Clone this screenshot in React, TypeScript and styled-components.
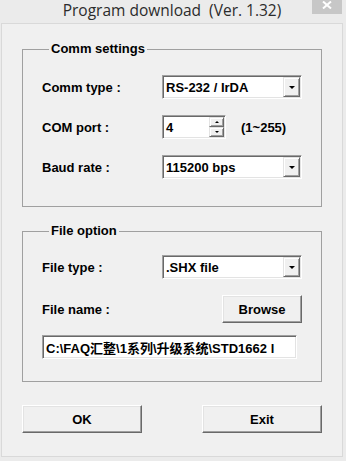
import styled, { createGlobalStyle } from "styled-components";

const GlobalStyle = createGlobalStyle`
    html, body {
        margin: 0;
        padding: 0;
        background: #ebebeb;
    }
    body {
        font-family: "Liberation Sans", Arial, sans-serif;
    }
`

const Window = styled.div`
    width: 346px;
    height: 461px;
    box-sizing: border-box;
    padding: 0 3px 4px 1px;
    background: #ebebeb;
    display: flex;
    flex-direction: column;
    overflow: hidden;
`

const TitleBar = styled.div`
    height: 23px;
    flex-shrink: 0;
    display: grid;
    grid-template-columns: 1fr auto 1fr;
    align-items: start;
`

const Title = styled.div`
    grid-column: 2;
    font-family: "Open Sans", "Noto Sans", sans-serif;
    font-size: 15.5px;
    line-height: 21px;
    color: #2b2b2b;
    white-space: pre;
`

const CloseButton = styled.div`
    grid-column: 3;
    justify-self: end;
    margin-right: 1px;
    width: 30px;
    height: 14px;
    background: #c7c7c7;
    display: flex;
    justify-content: center;
    align-items: flex-start;
    padding-top: 1px;
    box-sizing: border-box;
`

const Client = styled.div`
    flex: 1;
    box-sizing: border-box;
    border: 1px solid #d9d9d9;
    background: #f0f0f0;
    padding: 17px 0 0 20px;
    display: flex;
    flex-direction: column;
`

const Group = styled.fieldset<{ $pt: number; $pb: number; $mt?: number }>`
    width: 300px;
    box-sizing: border-box;
    margin: ${p => p.$mt ?? 0}px 0 0 0;
    padding: ${p => p.$pt}px 19px ${p => p.$pb}px 19px;
    border: 1px solid #a0a0a0;
    display: flex;
    flex-direction: column;
    min-width: 0;
`

const Legend = styled.legend`
    margin-left: 7px;
    padding: 0 2px;
    font-size: 13px;
    font-weight: bold;
    line-height: 16px;
    color: #000;
`

const Row = styled.div<{ $mt?: number }>`
    display: grid;
    grid-template-columns: 120px 1fr;
    align-items: center;
    margin-top: ${p => p.$mt ?? 0}px;
`

const Label = styled.span`
    font-size: 13px;
    font-weight: bold;
    color: #000;
`

const Sunken = styled.div<{ $w: number }>`
    width: ${p => p.$w}px;
    height: 24px;
    box-sizing: border-box;
    border: 1px solid;
    border-color: #a0a0a0 #ffffff #ffffff #a0a0a0;
    box-shadow: inset 1px 1px 0 #696969, inset -1px -1px 0 #e3e3e3;
    background: #fff;
    display: flex;
    align-items: stretch;
    padding: 1px;
`

const FieldText = styled.span`
    flex: 1;
    display: flex;
    align-items: center;
    padding-left: 2px;
    font-size: 13px;
    font-weight: bold;
    color: #000;
    white-space: nowrap;
    overflow: hidden;
`

const PathText = styled(FieldText)`
    font-family: "Liberation Sans", "Noto Sans CJK SC", sans-serif;
`

const DropButton = styled.div`
    width: 17px;
    box-sizing: border-box;
    background: #f0f0f0;
    border: 1px solid;
    border-color: #e3e3e3 #696969 #696969 #e3e3e3;
    box-shadow: inset 1px 1px 0 #fff, inset -1px -1px 0 #a0a0a0;
    display: flex;
    align-items: center;
    justify-content: center;
`

const Arrow = styled.div<{ $up?: boolean; $size: number }>`
    width: 0;
    height: 0;
    border-left: ${p => p.$size}px solid transparent;
    border-right: ${p => p.$size}px solid transparent;
    ${p => p.$up
        ? `border-bottom: ${p.$size}px solid #000;`
        : `border-top: ${p.$size}px solid #000;`}
`

const SpinColumn = styled.div`
    width: 15px;
    display: flex;
    flex-direction: column;
`

const SpinButton = styled(DropButton)`
    width: 15px;
    flex: 1;
`

const SpinRow = styled.div`
    display: flex;
    align-items: center;
    gap: 15px;
`

const Hint = styled.span`
    font-size: 13px;
    font-weight: bold;
    color: #000;
`

const Button = styled.button<{ $w: number; $h: number }>`
    width: ${p => p.$w}px;
    height: ${p => p.$h}px;
    box-sizing: border-box;
    background: #f0f0f0;
    border: 1px solid;
    border-color: #fff #696969 #696969 #fff;
    box-shadow: inset -1px -1px 0 #a0a0a0, inset 1px 1px 0 #e3e3e3;
    font-family: "Liberation Sans", Arial, sans-serif;
    font-size: 13px;
    font-weight: bold;
    color: #000;
    padding: 0;
`

const RightCell = styled.div`
    display: flex;
    justify-content: flex-end;
`

const PathBox = styled(Sunken)`
    margin-top: 12px;
`

const Buttons = styled.div`
    display: flex;
    gap: 60px;
    margin-top: 23px;
`

const Select = ({ value }: { value: string }) => (
    <Sunken $w={140}>
        <FieldText>{value}</FieldText>
        <DropButton>
            <Arrow $size={3.5} />
        </DropButton>
    </Sunken>
)

export default function App() {
    return (
        <>
            <GlobalStyle />
            <Window>
                <TitleBar>
                    <Title>{"Program download  (Ver. 1.32)"}</Title>
                    <CloseButton>
                        <svg width="10" height="8" viewBox="0 0 10 8">
                            <path d="M1 0.5 L9 7.5 M9 0.5 L1 7.5" stroke="#fff" strokeWidth="2" />
                        </svg>
                    </CloseButton>
                </TitleBar>
                <Client>
                    <Group $pt={18} $pb={27}>
                        <Legend>Comm settings</Legend>
                        <Row>
                            <Label>Comm type :</Label>
                            <Select value="RS-232 / IrDA" />
                        </Row>
                        <Row $mt={16}>
                            <Label>COM port :</Label>
                            <SpinRow>
                                <Sunken $w={64}>
                                    <FieldText>4</FieldText>
                                    <SpinColumn>
                                        <SpinButton><Arrow $up $size={2.5} /></SpinButton>
                                        <SpinButton><Arrow $size={2.5} /></SpinButton>
                                    </SpinColumn>
                                </Sunken>
                                <Hint>(1~255)</Hint>
                            </SpinRow>
                        </Row>
                        <Row $mt={16}>
                            <Label>Baud rate :</Label>
                            <Select value="115200 bps" />
                        </Row>
                    </Group>
                    <Group $pt={16} $pb={22} $mt={16}>
                        <Legend>File option</Legend>
                        <Row>
                            <Label>File type :</Label>
                            <Select value=".SHX file" />
                        </Row>
                        <Row $mt={16}>
                            <Label>File name :</Label>
                            <RightCell>
                                <Button $w={80} $h={28}>Browse</Button>
                            </RightCell>
                        </Row>
                        <PathBox $w={255}>
                            <PathText>{"C:\\FAQ汇整\\1系列\\升级系统\\STD1662 l"}</PathText>
                        </PathBox>
                    </Group>
                    <Buttons>
                        <Button $w={120} $h={28}>OK</Button>
                        <Button $w={120} $h={28}>Exit</Button>
                    </Buttons>
                </Client>
            </Window>
        </>
    )
}
